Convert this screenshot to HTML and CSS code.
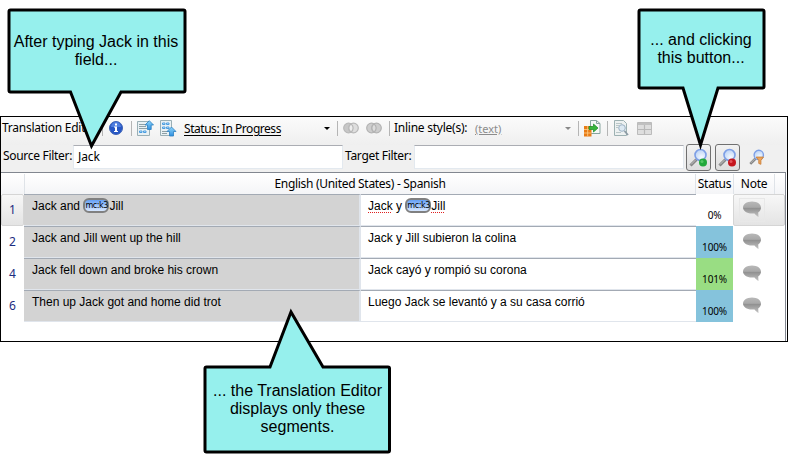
FILE: index.html
```html
<!DOCTYPE html>
<html lang="en">
<head>
<meta charset="utf-8">
<title>Translation Editor</title>
<link rel="stylesheet" href="styles.css">
</head>
<body>
<svg class="defs" width="0" height="0">
  <defs>
    <linearGradient id="blue" x1="0" y1="0" x2="0" y2="1"><stop offset="0" stop-color="#8fd6fb"/><stop offset="1" stop-color="#2f8fe0"/></linearGradient>
    <linearGradient id="bubble" x1="0" y1="0" x2="0" y2="1"><stop offset="0" stop-color="#b8b8b8"/><stop offset=".38" stop-color="#a8a8a8"/><stop offset=".42" stop-color="#8f8f8f"/><stop offset="1" stop-color="#c4c4c4"/></linearGradient>
    <radialGradient id="lens" cx=".6" cy=".7" r=".7"><stop offset="0" stop-color="#f4faff"/><stop offset="1" stop-color="#bcd3f5"/></radialGradient>
    <symbol id="note" viewBox="0 0 20 18"><path d="M10 .5C4.500 .5 1 3.300 1 6.600s3.500 6 9 6l2.500-.1c1 1.200 2.200 2.500 4 3.500l-.3-4.600C18 10.300 19 8.700 19 6.600 19 3.300 15.500.5 10 .5z" fill="url(#bubble)"/></symbol>
    <symbol id="glass" viewBox="0 0 20 20"><path d="M1.500 17.500l6-6" stroke="#858585" stroke-width="3"/><path d="M2 16.500l5-5" stroke="#c4c4c4"/><circle cx="11.500" cy="7" r="5.500" fill="url(#lens)" stroke="#7d9fe6" stroke-width="1.600"/></symbol>
  </defs>
</svg>
<main class="window">
  <div class="toolbar">
    <span class="title">Translation Editor</span>
    <i class="sep"></i>
    <svg class="info" width="14" height="14" viewBox="0 0 14 14"><circle cx="7" cy="7" r="6.500" fill="#2757c5" stroke="#3e63b5"/><path d="M2 6a5 5 0 0 1 10 0z" fill="#4e7ee0"/><path d="M6 2.500h2v2H6zM5 5.500h3v4.500h1v1H5v-1h1V6.500H5z" fill="#fff"/></svg>
    <i class="sep"></i>
    <svg class="doc-up" width="17" height="17" viewBox="0 0 17 17"><path d="M.5 1.500h12v14H.5z" fill="#e9f1f4" stroke="#9aafb5"/><path d="M2 4.500h6M2 6.500h7M2 8.500h8" stroke="#8fa0a6"/><path d="M2.500 11h2.500v1.500h-2.500zM6.500 11h2.500v1.500h-2.500z" fill="#d8f0ff" stroke="#4a9de0"/><path d="M10.500 9.500V5H8L12.300.7 16.500 5h-2.300v4.500z" fill="url(#blue)" stroke="#2b7fc0" stroke-width=".8"/></svg>
    <svg class="doc-down" width="17" height="17" viewBox="0 0 17 17"><path d="M.5.500h11v15H.5z" fill="#e9f1f4" stroke="#9aafb5"/><path d="M2.500 3h2.500v1.500H2.500zM6.500 3H9v1.500H6.500zM2.500 7h2.500v1.500H2.500zM6.500 7H9v1.500H6.500z" fill="#d8f0ff" stroke="#4a9de0"/><path d="M2 11.500h5M2 13.500h5" stroke="#8fa0a6"/><path d="M9.500 16v-4.500H7L11.500 7l4.500 4.500h-2.500V16z" fill="url(#blue)" stroke="#2b7fc0" stroke-width=".8"/></svg>
    <a class="status-link">Status: In Progress</a>
    <i class="caret"></i>
    <i class="sep"></i>
    <svg class="rings" width="16" height="12" viewBox="0 0 16 12"><g stroke="#b8b8b8" stroke-width="1.200"><circle cx="5.500" cy="6" r="4.800" fill="#c7c7c7"/><circle cx="10.500" cy="6" r="4.800" fill="#dedede"/><path d="M8 2a4.800 4.800 0 0 1 0 8 4.800 4.800 0 0 1 0-8z" fill="#eee"/></g></svg>
    <svg class="rings" width="16" height="12" viewBox="0 0 16 12"><g stroke="#b3b3b3" stroke-width="1.200"><circle cx="5.500" cy="6" r="4.800" fill="#cdcdcd"/><circle cx="10.500" cy="6" r="4.800" fill="#cdcdcd"/><path d="M8 2a4.800 4.800 0 0 1 0 8 4.800 4.800 0 0 1 0-8z" fill="#ddd"/></g></svg>
    <i class="sep"></i>
    <span class="inline">Inline style(s):</span>
    <a class="text-link">(text)</a>
    <i class="caret dim"></i>
    <i class="sep"></i>
    <svg class="insert" width="17" height="17" viewBox="0 0 17 17"><path d="M6.500.5h6l3.500 3v10H6.500z" fill="#f4f8f7" stroke="#87a5a0"/><path d="M12.500.5v3H16" fill="none" stroke="#87a5a0"/><path d="M0 6h7.500v10.500H0z" fill="#e87b16"/><path d="M0 9.500h7.500M0 13h7.500M3.700 6v10" stroke="#ffd28d" stroke-width=".8"/><path d="M5 6.500h4.500V4L14 8l-4.500 4V9.500H5z" fill="#35b63c" stroke="#168a25" stroke-width=".7"/></svg>
    <i class="sep"></i>
    <svg class="preview" width="16" height="17" viewBox="0 0 16 17"><path d="M.5.500h9l3 3v12H.5z" fill="#edf1f1" stroke="#9db1b2"/><path d="M2 3.500h6M2 5.500h3M2 7.500h2M2 12.500h5" stroke="#bac7c8"/><circle cx="8" cy="8" r="3.300" fill="#dce9f2" stroke="#9bb1c4"/><path d="M10.500 11l3.500 4" stroke="#8d9ba5" stroke-width="1.800"/></svg>
    <svg class="grid-icon" width="15" height="13" viewBox="0 0 15 13"><path d="M.5.500h14v12H.5z" fill="#dedede" stroke="#bbb"/><path d="M1 2h13" stroke="#c0c0c0" stroke-width="2"/><path d="M7.500 3v9M1 7.500h13" stroke="#b8b8b8" stroke-width="1.200"/></svg>
  </div>
  <div class="filters">
    <label class="src-label">Source Filter:</label>
    <div class="field src-field">Jack</div>
    <label class="tgt-label">Target Filter:</label>
    <div class="field tgt-field"></div>
    <span class="btn"><svg width="20" height="20"><use href="#glass"/><circle cx="14" cy="14.500" r="4" fill="#22a83b"/><circle cx="13" cy="13.500" r="1.500" fill="#55c766"/></svg></span>
    <span class="btn"><svg width="20" height="20"><use href="#glass"/><circle cx="14" cy="14.500" r="4" fill="#c5151d"/><circle cx="13" cy="13.500" r="1.500" fill="#e4545a"/></svg></span>
    <svg class="funnel" width="17" height="17" viewBox="0 0 20 20"><use href="#glass" width="20" height="20"/><path d="M8.500 9.500H17l-3 4V18l-2.500-1v-3.500z" fill="#f0a55a" stroke="#c87d36"/></svg>
  </div>
  <section class="table">
    <div class="row head"><span></span><span class="langs">English (United States) - Spanish</span><span class="h">Status</span><span class="h">Note</span><span class="h"></span></div>
    <div class="row selected"><span class="num">1</span><span class="src">Jack and <b class="tag">mc:k3</b>Jill</span><span class="tgt"><u>Jack</u> y <b class="tag">mc:k3</b><u>Jill</u></span><span class="pct">0%</span><span class="note"><svg width="20" height="18"><use href="#note"/></svg></span></div>
    <div class="row"><span class="num">2</span><span class="src">Jack and Jill went up the hill</span><span class="tgt">Jack y Jill subieron la colina</span><span class="pct full">100%</span><span class="note"><svg width="20" height="18"><use href="#note"/></svg></span></div>
    <div class="row"><span class="num">4</span><span class="src">Jack fell down and broke his crown</span><span class="tgt">Jack cayó y rompió su corona</span><span class="pct over">101%</span><span class="note"><svg width="20" height="18"><use href="#note"/></svg></span></div>
    <div class="row"><span class="num">6</span><span class="src">Then up Jack got and home did trot</span><span class="tgt">Luego Jack se levantó y a su casa corrió</span><span class="pct full">100%</span><span class="note"><svg width="20" height="18"><use href="#note"/></svg></span></div>
  </section>
</main>
<aside class="callout c1"><svg width="180" height="142"><path d="M3.500 2h173q1.500 0 1.500 1.500v79q0 1.500-1.500 1.500H114L84.500 138 63.500 84H3.500Q2 84 2 82.500v-79Q2 2 3.500 2z"/></svg><p>After typing Jack in this<br>field...</p></aside>
<aside class="callout c2"><svg width="130" height="142"><path d="M3.500 2h122q1.500 0 1.500 1.500v75q0 1.500-1.500 1.500H81L63.500 137 46 80H3.500Q2 80 2 78.500v-75Q2 2 3.500 2z"/></svg><p>... and clicking<br>this button...</p></aside>
<aside class="callout c3"><svg width="190" height="148"><path d="M3.500 59H67L88 4l32 55h65q1.500 0 1.500 1.500v82q0 1.500-1.500 1.500H3.500Q2 144 2 142.500v-82Q2 59 3.500 59z"/></svg><p>... the Translation Editor<br>displays only these<br>segments.</p></aside>
</body>
</html>
```
FILE: styles.css
```css
* { box-sizing: border-box; }
body { margin: 0; width: 788px; height: 462px; padding-top: 116px; overflow: hidden; position: relative; background: #fff; color: #000; font: 12px "Noto Sans", sans-serif; }
.defs { position: absolute; }
svg { display: block; flex: none; }
.window { width: 788px; height: 226px; border: 1px solid #000; background: #fff; }
.toolbar { height: 28px; display: flex; align-items: flex-start; padding-left: 1px; background: linear-gradient(#fbfbfb, #efefef); white-space: nowrap; }
.toolbar > * { flex: none; }
.title { width: 99px; height: 22px; line-height: 22px; letter-spacing: -.25px; margin-right: 1px; }
.sep { width: 1px; height: 15px; background: #b5b5b5; margin-top: 4px; }
.info { margin: 4px 8px 0 6px; }
.doc-up { margin: 3px 6px 0 5px; }
.doc-down { margin: 3px 7px 0 0; }
.status-link { width: 140px; line-height: 23px; text-decoration: underline; text-underline-offset: 2px; letter-spacing: -.46px; }
.caret { border: 3px solid transparent; border-top-color: #000; border-bottom: 0; margin: 10px 7px 0 0; }
.rings { margin: 5px 0 0 5px; }
.rings + .rings { margin: 5px 7px 0 7px; }
.inline { width: 81px; line-height: 22px; margin-left: 4px; letter-spacing: -.25px; }
.text-link { width: 90px; color: #8c8c8c; line-height: 23px; font-size: 11px; text-decoration: underline; }
.caret.dim { border-top-color: #888; margin-right: 7px; }
.insert { margin: 3px 6px 0 5px; }
.preview { margin: 3px 7px 0 6px; }
.grid-icon { margin-top: 5px; }
.filters { height: 27px; display: flex; align-items: flex-start; background: #f0f0f0; padding-left: 2px; white-space: nowrap; }
.filters > * { flex: none; }
.src-label, .tgt-label { line-height: 21px; letter-spacing: -.3px; width: 70px; }
.tgt-label { width: 69px; margin-left: 2px; }
.field { height: 24px; background: #fff; border: 1px solid #e3e9ef; border-top-color: #abadb3; line-height: 22px; padding-left: 4px; letter-spacing: -.1px; }
.src-field { width: 270px; }
.tgt-field { width: 270px; margin-right: 2px; }
.btn { width: 25px; height: 27px; margin: -1px 4px 0 0; border: 1px solid #707070; border-radius: 3px; background: linear-gradient(#f2f2f2, #ddd); padding: 3px 2px; }
.funnel { margin: 4px 0 0 5px; }
.table { border: 1px solid #828790; border-width: 1px 1px 0 0; height: 169px; padding-top: 1px; margin-right: 1px; }
.row { display: grid; grid-template-columns: 23px 337px 335px 37px 52px; height: 32px; }
.head { grid-template-columns: 23px 671px 38px 41px 1fr; height: 20px; background: linear-gradient(#fff, #f4f5f7); line-height: 20px; text-align: center; }
.head span { border-left: 1px solid #dfe3e8; letter-spacing: -.3px; }
.head span:first-child { border: 0; }
.num { color: #1c2c80; text-align: center; line-height: 31px; }
.src, .tgt { font: 12px/22px "Liberation Sans", sans-serif; border-top: 1px solid #a3aab4; border-bottom: 1px solid #e0e5ec; padding-left: 8px; white-space: nowrap; }
.tgt { padding-left: 7px; }
.src { background: #d3d3d3; border-right: 2px solid #e0e5ec; }
.pct { font-size: 10px; text-align: center; padding-top: 13px; line-height: 16px; letter-spacing: -.15px; }
.full { background: #85c3dc; }
.over { background: #99dd83; }
.note { padding: 7px 0 0 9px; }
.selected .note { padding: 6px 0 0 8px; }
.selected .num, .selected .note { background: linear-gradient(#f7f7f7, #e4e4e4); border: 1px solid #d5d5d5; border-radius: 2px; }
.selected .num { line-height: 29px; }
.selected .note svg { outline: 1px solid #e8e8e8; outline-offset: 2px; }
.tag { display: inline-block; vertical-align: top; width: 26px; height: 15px; margin-top: 3px; border: 2px solid #808080; border-radius: 6px; background: linear-gradient(#65a0f5, #d8e8ff); font: 8px/12px "DejaVu Sans", sans-serif; text-align: center; letter-spacing: -.4px; }
u { text-decoration: underline dotted #e02020; text-underline-offset: 2px; }
.callout { position: absolute; font: 16px/18px "Liberation Sans", sans-serif; text-align: center; }
.callout path { fill: #96f0ed; stroke: #000; stroke-width: 3; }
.callout p { position: absolute; margin: 0; left: 0; right: 0; white-space: nowrap; }
.c1 { left: 7px; top: 8px; width: 180px; }
.c1 p { top: 25px; left: -1px; right: 1px; }
.c2 { left: 637px; top: 8px; width: 130px; }
.c2 p { top: 23px; right: 2px; }
.c3 { left: 203px; top: 308px; width: 190px; }
.c3 p { top: 74px; right: 1px; }
```
